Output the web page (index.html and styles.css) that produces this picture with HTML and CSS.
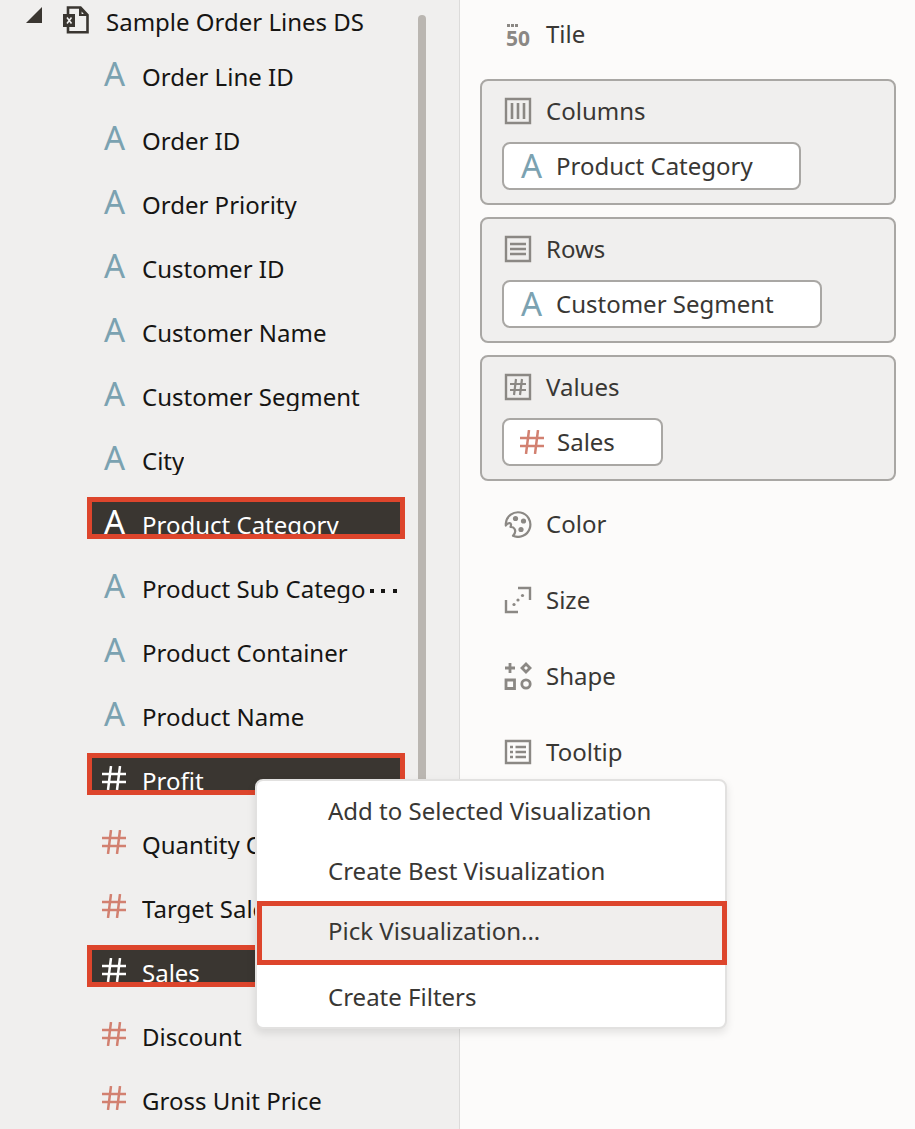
FILE: index.html
```
<!DOCTYPE html>
<html lang="en">
<head>
<meta charset="utf-8">
<title>Sample Order Lines DS</title>
<link rel="stylesheet" href="styles.css">
</head>
<body>
<svg class="defs" aria-hidden="true">
  <symbol id="hash" viewBox="0 0 24 24"><path d="M9 0 6 24M18 0l-3 24M0 8h24M0 16h24" fill="none" stroke="currentColor" stroke-width="2.500"/></symbol>
</svg>
<div class="app">
  <aside class="sidebar">
    <nav class="tree" aria-label="Data">
      <button class="root" type="button" aria-expanded="true">
        <svg class="caret" viewBox="0 0 16 16" aria-hidden="true"><path d="M16 0v16H0z" fill="currentColor"/></svg>
        <svg class="file" viewBox="0 0 26 28" aria-hidden="true">
          <path d="M5 9V1.500h12.500L24.500 9v17.200H5V20" fill="none" stroke="currentColor" stroke-width="2.600"/>
          <path d="M16 1v9h9z" fill="currentColor"/><path d="M18.600 5.500v2.500h2.200z" fill="#f0efee"/>
          <rect x="0" y="8" width="12" height="13" fill="currentColor"/>
          <path d="M4 11.500l4.500 6M8.500 11.500l-4.500 6" stroke="#f0efee" stroke-width="1.600"/>
        </svg>
        <span>Sample Order Lines DS</span>
      </button>
      <ul class="fields">
        <li><button class="field" type="button"><span class="alpha" aria-hidden="true">A</span><span class="label">Order Line ID</span></button></li>
        <li><button class="field" type="button"><span class="alpha" aria-hidden="true">A</span><span class="label">Order ID</span></button></li>
        <li><button class="field" type="button"><span class="alpha" aria-hidden="true">A</span><span class="label">Order Priority</span></button></li>
        <li><button class="field" type="button"><span class="alpha" aria-hidden="true">A</span><span class="label">Customer ID</span></button></li>
        <li><button class="field" type="button"><span class="alpha" aria-hidden="true">A</span><span class="label">Customer Name</span></button></li>
        <li><button class="field" type="button"><span class="alpha" aria-hidden="true">A</span><span class="label">Customer Segment</span></button></li>
        <li><button class="field" type="button"><span class="alpha" aria-hidden="true">A</span><span class="label">City</span></button></li>
        <li><button class="field selected" type="button"><span class="alpha" aria-hidden="true">A</span><span class="label">Product Category</span></button></li>
        <li><button class="field" type="button"><span class="alpha" aria-hidden="true">A</span><span class="label">Product Sub Catego</span><svg class="dots" viewBox="0 0 30 42" aria-hidden="true"><path d="M2 28h4v4H2zM13 28h4v4h-4zM25 28h4v4h-4z" fill="currentColor"/></svg></button></li>
        <li><button class="field" type="button"><span class="alpha" aria-hidden="true">A</span><span class="label">Product Container</span></button></li>
        <li><button class="field" type="button"><span class="alpha" aria-hidden="true">A</span><span class="label">Product Name</span></button></li>
        <li><button class="field selected" type="button"><svg class="hash" aria-hidden="true"><use href="#hash"/></svg><span class="label">Profit</span></button></li>
        <li><button class="field" type="button"><svg class="hash" aria-hidden="true"><use href="#hash"/></svg><span class="label">Quantity Ordered</span></button></li>
        <li><button class="field" type="button"><svg class="hash" aria-hidden="true"><use href="#hash"/></svg><span class="label">Target Sales</span></button></li>
        <li><button class="field selected" type="button"><svg class="hash" aria-hidden="true"><use href="#hash"/></svg><span class="label">Sales</span></button></li>
        <li><button class="field" type="button"><svg class="hash" aria-hidden="true"><use href="#hash"/></svg><span class="label">Discount</span></button></li>
        <li><button class="field" type="button"><svg class="hash" aria-hidden="true"><use href="#hash"/></svg><span class="label">Gross Unit Price</span></button></li>
      </ul>
    </nav>
    <div class="thumb"></div>
  </aside>

  <main class="grammar">
    <section class="slot">
      <h2 class="heading"><svg class="icon" viewBox="0 0 28 28" aria-hidden="true"><path d="M3 4h3v3H3zM7 4h3v3H7zM11 4h3v3h-3z" fill="currentColor"/><text class="digits" x="2" y="26">50</text></svg>Tile</h2>
    </section>
    <section class="slot filled">
      <h2 class="heading"><svg class="icon" viewBox="0 0 28 28" aria-hidden="true"><path d="M2 2h24v24H2z" fill="none" stroke="currentColor" stroke-width="2.400"/><path d="M8 6v16M14 6v16M20 6v16" stroke="currentColor" stroke-width="2.600"/></svg>Columns</h2>
      <button class="chip" type="button"><span class="alpha" aria-hidden="true">A</span>Product Category</button>
    </section>
    <section class="slot filled">
      <h2 class="heading"><svg class="icon" viewBox="0 0 28 28" aria-hidden="true"><path d="M2 2h24v24H2z" fill="none" stroke="currentColor" stroke-width="2.400"/><path d="M6 9h16M6 14h16M6 19h16" stroke="currentColor" stroke-width="2.400"/></svg>Rows</h2>
      <button class="chip" type="button"><span class="alpha" aria-hidden="true">A</span>Customer Segment</button>
    </section>
    <section class="slot filled">
      <h2 class="heading"><svg class="icon" viewBox="0 0 28 28" aria-hidden="true"><path d="M2 2h24v24H2z" fill="none" stroke="currentColor" stroke-width="2.400"/><path d="M12 6l-2 16M18 6l-2 16M6 11h16M6 17h16" fill="none" stroke="currentColor" stroke-width="2.200"/></svg>Values</h2>
      <button class="chip" type="button"><svg class="hash" aria-hidden="true"><use href="#hash"/></svg>Sales</button>
    </section>
    <section class="slot">
      <h2 class="heading"><svg class="icon" viewBox="0 0 28 28" aria-hidden="true"><path d="M1.800 13.500A12.300 12.300 0 1 1 9 25.800Q12.500 22 10.500 18.800Q9.500 17 6.500 17Q8 13.500 5.500 13.200Q3.500 13 1.800 15.500z" fill="none" stroke="currentColor" stroke-width="2.200" stroke-linejoin="round"/><circle cx="11.500" cy="8.500" r="2.600" fill="currentColor"/><circle cx="19.500" cy="11" r="2.600" fill="currentColor"/><circle cx="17" cy="19.500" r="2.600" fill="currentColor"/></svg>Color</h2>
    </section>
    <section class="slot">
      <h2 class="heading"><svg class="icon" viewBox="0 0 28 28" aria-hidden="true"><path d="M14 2h12v12M2 14v12h12" fill="none" stroke="currentColor" stroke-width="2.400"/><g fill="currentColor"><circle cx="10" cy="18.500" r="1.600"/><circle cx="14" cy="14" r="1.600"/><circle cx="18.500" cy="9.500" r="1.600"/></g></svg>Size</h2>
    </section>
    <section class="slot">
      <h2 class="heading"><svg class="icon" viewBox="0 0 28 28" aria-hidden="true"><g fill="none" stroke="currentColor" stroke-width="2.800"><path d="M1 6h10M6 1v10M22 2l4 4-4 4-4-4zM2 18h8.500v8.500H2z"/><circle cx="22" cy="22" r="4.200"/></g></svg>Shape</h2>
    </section>
    <section class="slot">
      <h2 class="heading"><svg class="icon" viewBox="0 0 28 28" aria-hidden="true"><path d="M2 3h24v22H2z" fill="none" stroke="currentColor" stroke-width="2.400"/><path d="M6 9h3M6 14h3M6 19h3M11.500 9H22M11.500 14H22M11.500 19H22" stroke="currentColor" stroke-width="2.400"/></svg>Tooltip</h2>
    </section>
  </main>

  <div class="menu" role="menu">
    <button type="button" role="menuitem">Add to Selected Visualization</button>
    <button type="button" role="menuitem">Create Best Visualization</button>
    <button class="active" type="button" role="menuitem">Pick Visualization...</button>
    <button type="button" role="menuitem">Create Filters</button>
  </div>
</div>
</body>
</html>
```
FILE: styles.css
```
* { box-sizing: border-box; }

body {
  margin: 0;
  background: #fcfbfa;
  color: #393734;
  font: 24px/32px "Noto Sans", "Open Sans", sans-serif;
}

button {
  margin: 0;
  padding: 0;
  border: 0;
  background: none;
  color: inherit;
  font: inherit;
  text-align: left;
  white-space: nowrap;
}

.defs { display: none; }

.app {
  position: relative;
  display: grid;
  grid-template-columns: 460px 1fr;
  height: 100vh;
  overflow: hidden;
}

.sidebar {
  display: flex;
  gap: 13px;
  padding-right: 33px;
  border-right: 1px solid #dcdbda;
  background: #f0efee;
  color: #161513;
  overflow: hidden;
}

.tree { flex: 1; }

.thumb {
  width: 8px;
  height: 820px;
  margin-top: 15px;
  border-radius: 4px;
  background: #bab6b1;
}

.root {
  display: flex;
  align-items: flex-start;
  height: 49px;
  padding: 6px 0 0 26px;
}

.caret { width: 16px; height: 16px; margin: 1px 21px 0 0; color: #3a3631; }
.file { width: 26px; height: 28px; margin-right: 17px; color: #3a3631; }

.fields {
  display: grid;
  gap: 22px;
  margin: 0;
  padding: 0 0 0 87px;
  list-style: none;
}

.field {
  display: flex;
  align-items: flex-start;
  width: 100%;
  height: 42px;
  border: 5px solid transparent;
}

.field .alpha { margin: 4px 0 0 11px; }
.field .hash { margin: 8px 0 0 10px; }

.label {
  height: 30px;
  margin: 7px 0 0 16px;
  overflow: hidden;
}

.selected {
  border-color: #dd452c;
  background: #3a3631;
  color: #fff;
}

.selected .label { height: 25px; }

.dots { width: 30px; height: 42px; margin: -5px 0 0 2px; }

.alpha {
  flex: none;
  width: 23px;
  color: #7ba2b1;
  font-size: 33px;
  line-height: 32px;
  text-align: center;
}

.hash {
  flex: none;
  width: 24px;
  height: 24px;
  color: #d28070;
}

.selected .alpha,
.selected .hash { color: #fff; }

.grammar {
  display: flex;
  flex-direction: column;
  gap: 12px;
  padding: 3px 19px 0 20px;
}

.slot {
  padding: 0 20px;
  border: 2px solid transparent;
  border-radius: 8px;
}

.filled {
  padding-bottom: 13px;
  border-color: #a9a7a4;
  background: #f0efee;
}

.heading {
  display: flex;
  align-items: center;
  gap: 14px;
  height: 60px;
  margin: 0;
  padding: 0 0 2px 2px;
  font-size: 24px;
  font-weight: 400;
}

.filled .heading { height: 61px; }

.icon { width: 28px; height: 28px; color: #8b8884; }
.digits { fill: currentColor; font-size: 21px; font-weight: 700; }

.chip {
  display: flex;
  align-items: center;
  gap: 13px;
  height: 48px;
  padding: 0 46px 0 16px;
  border: 2px solid #a9a7a4;
  border-radius: 8px;
  background: #fff;
}

.menu {
  position: absolute;
  top: 779px;
  left: 255px;
  display: flex;
  flex-direction: column;
  width: 472px;
  border: 2px solid #e2e1e0;
  border-radius: 8px;
  background: #fff;
  box-shadow: 0 4px 8px rgba(0, 0, 0, 0.1);
}

.menu button { height: 60px; padding-left: 71px; }

.menu .active {
  height: 64px;
  margin-right: -2px;
  padding: 0 0 4px 66px;
  border: 5px solid #dd452c;
  background: #f0eeed;
}

.menu button:last-child { height: 62px; padding-top: 2px; }
```
